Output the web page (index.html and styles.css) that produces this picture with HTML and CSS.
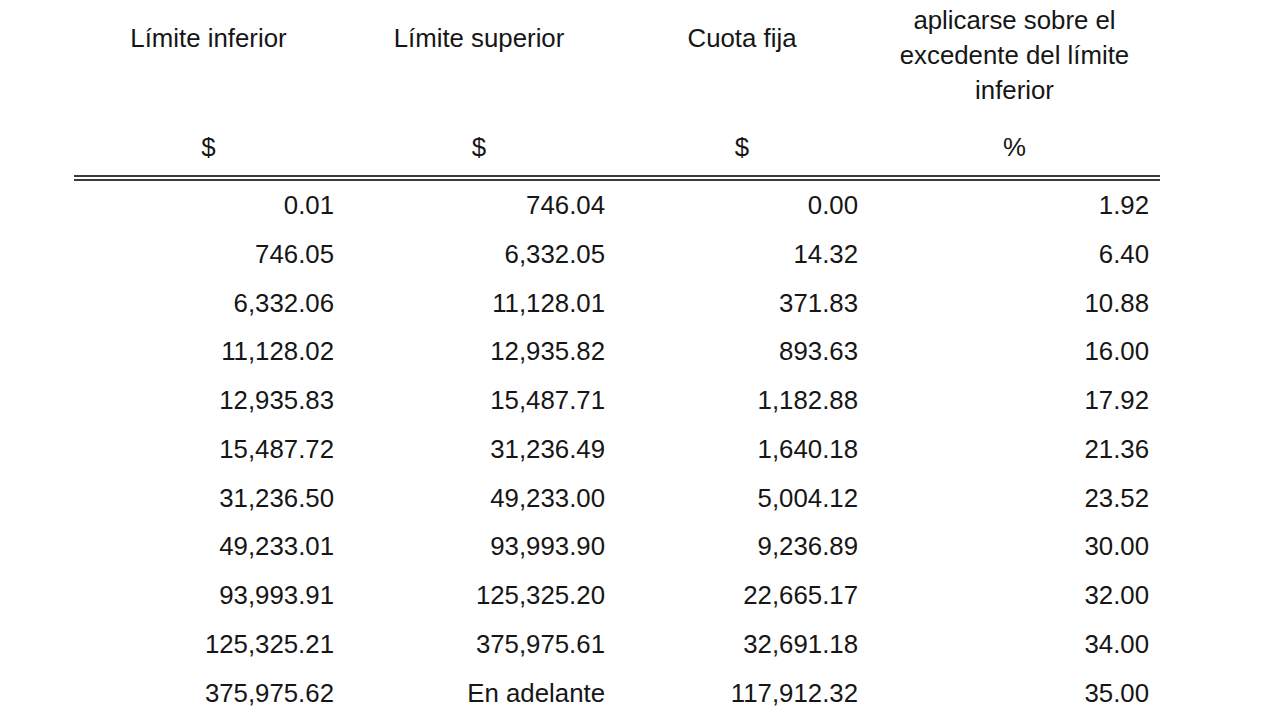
FILE: index.html
```html
<!DOCTYPE html>
<html lang="es">
<head>
<meta charset="utf-8">
<title>Tarifa</title>
<link rel="stylesheet" href="styles.css">
</head>
<body>
<div class="page">
  <table class="tarifa">
    <colgroup>
      <col class="c1"><col class="c2"><col class="c3"><col class="c4">
    </colgroup>
    <thead>
      <tr class="head-titles">
        <th>Límite inferior</th>
        <th>Límite superior</th>
        <th>Cuota fija</th>
        <th>Por ciento para<br>aplicarse sobre el<br>excedente del límite<br>inferior</th>
      </tr>
      <tr class="head-units">
        <th>$</th>
        <th>$</th>
        <th>$</th>
        <th>%</th>
      </tr>
    </thead>
    <tbody>
      <tr><td>0.01</td><td>746.04</td><td>0.00</td><td>1.92</td></tr>
      <tr><td>746.05</td><td>6,332.05</td><td>14.32</td><td>6.40</td></tr>
      <tr><td>6,332.06</td><td>11,128.01</td><td>371.83</td><td>10.88</td></tr>
      <tr><td>11,128.02</td><td>12,935.82</td><td>893.63</td><td>16.00</td></tr>
      <tr><td>12,935.83</td><td>15,487.71</td><td>1,182.88</td><td>17.92</td></tr>
      <tr><td>15,487.72</td><td>31,236.49</td><td>1,640.18</td><td>21.36</td></tr>
      <tr><td>31,236.50</td><td>49,233.00</td><td>5,004.12</td><td>23.52</td></tr>
      <tr><td>49,233.01</td><td>93,993.90</td><td>9,236.89</td><td>30.00</td></tr>
      <tr><td>93,993.91</td><td>125,325.20</td><td>22,665.17</td><td>32.00</td></tr>
      <tr><td>125,325.21</td><td>375,975.61</td><td>32,691.18</td><td>34.00</td></tr>
      <tr><td>375,975.62</td><td>En adelante</td><td>117,912.32</td><td>35.00</td></tr>
    </tbody>
  </table>
</div>
</body>
</html>
```

FILE: styles.css
```css
html, body {
  margin: 0;
  padding: 0;
  background: #ffffff;
  overflow: hidden;
}

.page {
  width: 1280px;
  height: 720px;
  overflow: hidden;
  padding-left: 74px;
  box-sizing: border-box;
}

.tarifa {
  margin-top: -32px;
  width: 1086px;
  border-collapse: collapse;
  table-layout: fixed;
  font-family: "Liberation Sans", Arial, sans-serif;
  font-size: 25.8px;
  color: #161616;
}

.c1 { width: 269px; }
.c2 { width: 272px; }
.c3 { width: 254px; }
.c4 { width: 291px; }

.tarifa th {
  font-weight: normal;
  text-align: center;
  vertical-align: middle;
  line-height: 35px;
  padding: 0;
}

.head-titles th {
  height: 140px;
}

.head-units th {
  padding-top: 22px;
  padding-bottom: 10px;
  border-bottom: 6px double #3a3a3a;
}

.tarifa td {
  text-align: right;
  padding: 0 11px 0 0;
  height: 48.75px;
  line-height: 48.75px;
  white-space: nowrap;
}

.tarifa td:first-child {
  padding-right: 9px;
}

.tarifa td:nth-child(2) {
  padding-right: 10px;
}
```
